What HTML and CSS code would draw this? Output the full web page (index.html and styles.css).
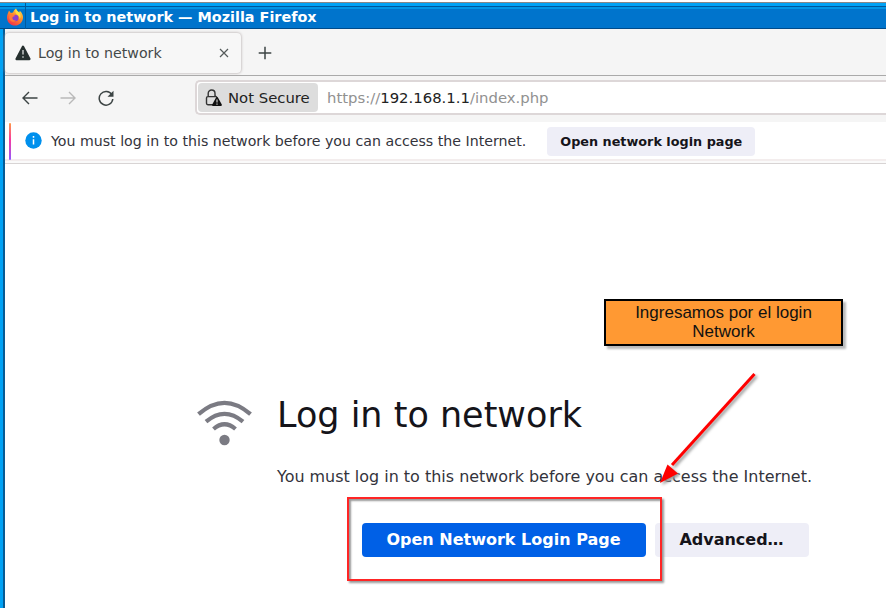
FILE: index.html
```html
<!DOCTYPE html>
<html lang="en">
<head>
<meta charset="utf-8">
<title>Log in to network</title>
<link rel="stylesheet" href="styles.css">
</head>
<body>
<div class="window">
  <header class="titlebar">
    <div class="app-icon">
      <svg width="18" height="18" viewBox="0 0 18 18">
        <defs>
          <linearGradient id="fox" x1="0.8" y1="0" x2="0.2" y2="1"><stop offset="0" stop-color="#ffe04a"/><stop offset=".45" stop-color="#ff8a2a"/><stop offset="1" stop-color="#f0284f"/></linearGradient>
        </defs>
        <path d="M1.800 5.500 3 2.500 4.800 5 7 4.600C7.600 2.800 8.400 1.600 10 .4c.3 2 1.800 2.800 3.300 4.200l.5-1.800c2.600 2.600 3.400 4.700 3.200 7.200-.4 4.300-3.800 7.600-8 7.600C4.500 17.600 1 14.200 1 9.800c0-1.700.2-3 .8-4.300Z" fill="url(#fox)"/>
        <circle cx="9.300" cy="10" r="3.200" fill="#8a3fd0"/>
        <path d="M3.600 7c2.200-1 4.200-.5 5.700 1-1.700 0-2.200.8-3.100 1.500.1 2 1.800 3.400 3.800 3-2 2.400-6.400 1.300-6.800-2.400-.1-1.200 0-2.200.4-3.100Z" fill="#ff7a3a"/>
        <path d="M10 .4c.3 2 1.800 2.800 3.300 4.200 1.500 2 1.900 4.500.4 6.600.2-2.700-1.400-3.700-2.700-4.700C9.300 5 8.800 2.800 10 .4Z" fill="#ffdf3f"/>
      </svg>
    </div>
    <div class="window-title">Log in to network — Mozilla Firefox</div>
  </header>
  <div class="browser">
    <div class="tabstrip">
      <div class="tab">
        <svg class="tab-icon" width="16" height="16" viewBox="0 0 16 16"><path d="M8 1.800 14.400 14H1.600Z" fill="#26302f" stroke="#26302f" stroke-width="2.400" stroke-linejoin="round"/><path d="M8 5v4.500M8 11.200v1.600" stroke="#c4c8c8" stroke-width="1.500"/></svg>
        <span class="tab-label">Log in to network</span>
        <svg class="tab-close" width="10" height="10" viewBox="0 0 10 10"><path d="m1 1 8 8M9 1 1 9" stroke="#555b5b" stroke-width="1.200"/></svg>
      </div>
      <svg class="new-tab" width="14" height="14" viewBox="0 0 14 14"><path d="M7 .7v12.600M.7 7h12.600" stroke="#3c4444" stroke-width="1.500"/></svg>
    </div>
    <div class="toolbar">
      <svg class="nav" width="16" height="14" viewBox="0 0 16 14"><path d="M15.500 7H1.500M7 1 1 7l6 6" fill="none" stroke="#3c4444" stroke-width="1.400"/></svg>
      <svg class="nav forward" width="16" height="14" viewBox="0 0 16 14"><path d="M.5 7h14M9 1l6 6-6 6" fill="none" stroke="#b9b9b9" stroke-width="1.400"/></svg>
      <svg class="nav reload" width="16" height="16" viewBox="0 0 16 16"><path d="M13.800 4.700A6.800 6.800 0 1 0 14.800 9" fill="none" stroke="#3c4444" stroke-width="1.500"/><path d="M15.500.7v6H9.500Z" fill="#3c4444"/></svg>
      <div class="urlbar">
        <div class="identity">
          <svg width="18" height="18" viewBox="0 0 18 18"><path d="M8 15.700H2.900a1.400 1.400 0 0 1-1.400-1.400V9a1.400 1.400 0 0 1 1.400-1.400h7.400A1.400 1.400 0 0 1 11.700 8M3.200 7.400V4.400a3.400 3.400 0 0 1 6.800 0v3" fill="none" stroke="#333" stroke-width="1.400"/><path d="M12 8.700 16 16H8Z" fill="#111" stroke="#111" stroke-width="1.800" stroke-linejoin="round"/><path d="M12 10.500v3M12 14.500v1.200" stroke="#ddd" stroke-width="1.100"/></svg>
          <span class="identity-label">Not Secure</span>
        </div>
        <div class="url">https://<b>192.168.1.1</b>/index.php</div>
      </div>
    </div>
    <div class="notification">
      <i class="accent"></i>
      <svg class="info" width="17" height="17" viewBox="0 0 17 17"><circle cx="8.500" cy="8.500" r="8.200" fill="#0090ed"/><path d="M8.500 7.300v5.200M8.500 4v1.700" stroke="#fff" stroke-width="1.500"/></svg>
      <span class="message">You must log in to this network before you can access the Internet.</span>
      <button class="notify-button">Open network login page</button>
    </div>
    <main class="page">
      <svg class="wifi" width="56" height="46" viewBox="0 0 56 46"><g fill="none" stroke="#7b7b83" stroke-width="4.200"><path d="M1.500 14.200Q27.500-8.500 53.500 14.200"/><path d="M9 21.700Q27.500 6 46 21.700"/><path d="M16.500 29Q27.500 19.500 38.500 29"/></g><circle cx="27.500" cy="40" r="5.200" fill="#7b7b83"/></svg>
      <div class="page-body">
        <h1>Log in to network</h1>
        <p>You must log in to this network before you can access the Internet.</p>
        <div class="actions">
          <button class="primary">Open Network Login Page</button>
          <button class="secondary">Advanced…</button>
        </div>
      </div>
    </main>
  </div>
</div>
<div class="callout">Ingresamos por el login<br>Network</div>
<div class="highlight"></div>
<svg class="arrow" width="110" height="124" viewBox="0 0 110 124"><path d="M99.500 8 17 99" stroke="#f00" stroke-width="3"/><path d="m5 117 7.500-18.500 10.500 9Z" fill="#f00"/></svg>
</body>
</html>
```
FILE: styles.css
```css
* { box-sizing: border-box; }
body { margin: 0; width: 886px; height: 608px; overflow: hidden; position: relative; background: #fff; font-family: "DejaVu Sans", sans-serif; color: #33333b; white-space: nowrap; }
svg { display: block; flex: none; }
button { border: 0; padding: 0; font-family: inherit; font-weight: 700; color: #15141a; background: #eeeef7; border-radius: 4px; white-space: nowrap; }
.window { height: 608px; margin-top: 2px; border-top: 1px solid #888; background: #00a2f5; }
.titlebar { height: 26px; display: flex; align-items: center; background: linear-gradient(#00a2f5 0 3px, #00579b 3px 4px, #0095e5 4px 6px, #0074cc 6px 25px, #004b8a 25px); }
.app-icon { width: 26px; height: 26px; padding: 5px 0 0 6px; border-right: 1px solid #005a9e; }
.window-title { padding-left: 4px; margin-top: 1px; font-size: 14.400px; font-weight: 700; color: #fff; }
.browser { margin-left: 3px; height: 580px; border-left: 2px solid #075b94; background: #fff; }
.tabstrip { height: 47px; display: flex; align-items: center; padding-top: 1px; background: #f5f5f5; border-bottom: 1px solid #aaa; }
.tab { width: 236px; height: 40px; display: flex; align-items: center; padding: 0 12px 0 10px; background: #f7f7f7; border-radius: 4px; box-shadow: 0 0 3px #a69e9e; }
.tab-label { margin-left: 7px; font-size: 14.200px; color: #444949; }
.tab-close { margin-left: auto; }
.new-tab { margin-left: 17px; }
.toolbar { height: 46px; display: flex; align-items: center; padding-left: 17px; background: #f5f5f5; }
.nav { margin-top: -2px; }
.forward { margin-left: 22px; }
.reload { margin-left: 22px; }
.urlbar { flex: 1; height: 35px; display: flex; align-items: center; margin-left: 81px; margin-top: -3px; padding-left: 1px; border: 2px solid #ddd7d8; border-right: 0; border-radius: 5px 0 0 5px; background: #fff; }
.identity { width: 120px; height: 29px; display: flex; align-items: center; padding-left: 7px; background: #ddd; border-radius: 4px; color: #222; }
.identity-label { margin-left: 5px; font-size: 14.850px; }
.url { margin-left: 9px; font-size: 14.850px; color: #919191; }
.url b { color: #222; font-weight: 400; }
.notification { height: 43px; display: flex; align-items: center; padding: 0 0 5px 4px; background: linear-gradient(#fff 0 37px, #f3eded 37px 39px, #fafafa 39px 41px, #d8d4d4 41px 42px, #fff 42px); }
.accent { width: 2px; height: 37px; background: linear-gradient(#ff9a45, #f83aa0 45%, #9059ff); border-radius: 2px; }
.info { margin-left: 14px; margin-top: -2px; }
.message { margin-left: 9px; font-size: 14.180px; }
.notify-button { margin-left: 21px; width: 208px; height: 29px; font-size: 12.800px; }
.page { display: flex; padding: 228px 0 0 192px; }
.wifi { margin-top: 7px; }
.page-body { margin-left: 24px; width: 535px; }
h1 { margin: 0; font-size: 35px; line-height: 44px; font-weight: 400; color: #15141a; }
p { margin: 28px 0 0; font-size: 15.960px; line-height: 24px; }
.actions { display: flex; gap: 9px; margin: 34px 0 0 84.500px; }
.actions button { height: 34px; padding-bottom: 1px; font-size: 16px; flex: none; }
.actions .primary { width: 284px; background: #0060e6; color: #fff; }
.actions .secondary { width: 154px; }
.callout { position: absolute; left: 604px; top: 299px; width: 239px; height: 47px; padding-top: 2px; background: #ff9933; border: 2px solid #000; box-shadow: 3px 3px 2px #bbb; color: #111; text-align: center; font: 17px/19px "Liberation Sans", sans-serif; }
.highlight { position: absolute; left: 347px; top: 497px; width: 315px; height: 84px; border: 2px solid #ff2525; box-shadow: 2px 2px 2px #999, inset 2px 2px 2px #999; }
.arrow { position: absolute; left: 655px; top: 366px; filter: drop-shadow(2px 2px 1.500px #999); }
```
